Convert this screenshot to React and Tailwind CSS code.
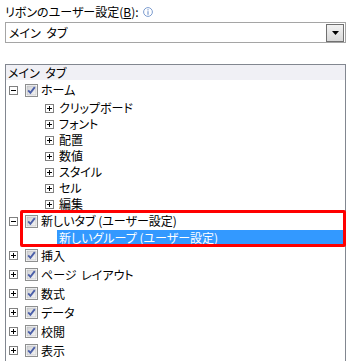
import React from "react";

function Expander({ open }) {
  return (
    <svg width="9" height="9" viewBox="0 0 9 9" className="shrink-0">
      <rect x="0.5" y="0.5" width="8" height="8" fill="#ffffff" stroke="#808080" />
      <line x1="2" y1="4.5" x2="7" y2="4.5" stroke="#000000" />
      {!open && <line x1="4.5" y1="2" x2="4.5" y2="7" stroke="#000000" />}
    </svg>
  );
}

function Check() {
  return (
    <svg width="13" height="13" viewBox="0 0 13 13" className="shrink-0">
      <defs>
        <linearGradient id="cbg" x1="0" y1="0" x2="1" y2="1">
          <stop offset="0" stopColor="#cfd0d2" />
          <stop offset="1" stopColor="#f6f6f6" />
        </linearGradient>
      </defs>
      <rect x="0.5" y="0.5" width="12" height="12" fill="#ffffff" stroke="#8e8f8f" />
      <rect x="2" y="2" width="9" height="9" fill="url(#cbg)" stroke="#b4b6b8" strokeWidth="0.6" />
      <path d="M3.2 6.4 L5.4 8.8 L9.8 3.2" fill="none" stroke="#4b5fa8" strokeWidth="1.9" />
    </svg>
  );
}

function TopRow({ label, open, h = "h-[19px]", wide = false }) {
  return (
    <div className={`flex items-center ${h}`}>
      <div className="ml-[3px]">
        <Expander open={open} />
      </div>
      <div className="ml-[7px]">
        <Check />
      </div>
      <span className={wide ? "ml-[3px] leading-none [word-spacing:2px]" : "ml-[3px] leading-none"}>{label}</span>
    </div>
  );
}

function ChildRow({ label }) {
  return (
    <div className="flex items-center h-[16px]">
      <div className="ml-[39px]">
        <Expander open={false} />
      </div>
      <span className="ml-[5px] leading-none">{label}</span>
    </div>
  );
}

export default function App() {
  return (
    <div
      className="w-[353px] h-[361px] overflow-hidden bg-white text-black text-[12px] [font-feature-settings:'palt']"
      style={{ fontFamily: '"Noto Sans CJK JP", "Noto Sans", sans-serif' }}
    >
      <div className="flex items-center pl-[5px] pt-[3px] h-[20px] leading-none">
        <span>
          リボンのユーザー設定(<span className="underline">B</span>):
        </span>
        <svg width="10" height="10" viewBox="0 0 10 10" className="ml-[4px]">
          <circle cx="5" cy="5" r="4.4" fill="none" stroke="#7c9ccf" strokeWidth="1" />
          <rect x="4.4" y="2.2" width="1.2" height="1.2" fill="#7c9ccf" />
          <rect x="4.4" y="4.2" width="1.2" height="3.6" fill="#7c9ccf" />
        </svg>
      </div>

      <div className="ml-[5px] mt-[2px] w-[341px] h-[21px] border border-[#a5a5a5] flex items-center bg-white">
        <span className="pl-[3px] flex-1 leading-none [word-spacing:3px]">メイン タブ</span>
        <div className="w-[18px] h-[18px] mr-[1px] border border-[#707070] bg-gradient-to-b from-[#f2f2f2] to-[#d9d9d9] flex items-center justify-center">
          <svg width="7" height="4" viewBox="0 0 7 4">
            <path d="M0 0 H7 L3.5 4 Z" fill="#000000" />
          </svg>
        </div>
      </div>

      <div className="relative ml-[5px] mt-[21px] w-[341px] h-[300px] border border-[#828790]">
        <div className="h-[15px] bg-[#f0f0f5] flex items-center pl-[2px] leading-none [word-spacing:3px]">メイン タブ</div>
        <TopRow label="ホーム" open={true} h="h-[20px]" />
        <ChildRow label="クリップボード" />
        <ChildRow label="フォント" />
        <ChildRow label="配置" />
        <ChildRow label="数値" />
        <ChildRow label="スタイル" />
        <ChildRow label="セル" />
        <ChildRow label="編集" />
        <TopRow label="新しいタブ (ユーザー設定)" open={true} h="h-[18px]" />
        <div className="flex items-center h-[16px]">
          <div className="ml-[51px] flex-1 h-[16px] bg-[#3399ff] text-white flex items-center pl-[2px] mr-[2px] leading-none">
            新しいグループ (ユーザー設定)
          </div>
        </div>
        <TopRow label="挿入" open={false} h="h-[19px]" />
        <TopRow label="ページ レイアウト" open={false} h="h-[19px]" wide />
        <TopRow label="数式" open={false} h="h-[19px]" />
        <TopRow label="データ" open={false} h="h-[19px]" />
        <TopRow label="校閲" open={false} h="h-[19px]" />
        <TopRow label="表示" open={false} h="h-[19px]" />

        <div className="absolute left-[14px] top-[145px] w-[326px] h-[37px] border-[3px] border-[#ff0000] rounded-[2px]" />
      </div>
    </div>
  );
}
